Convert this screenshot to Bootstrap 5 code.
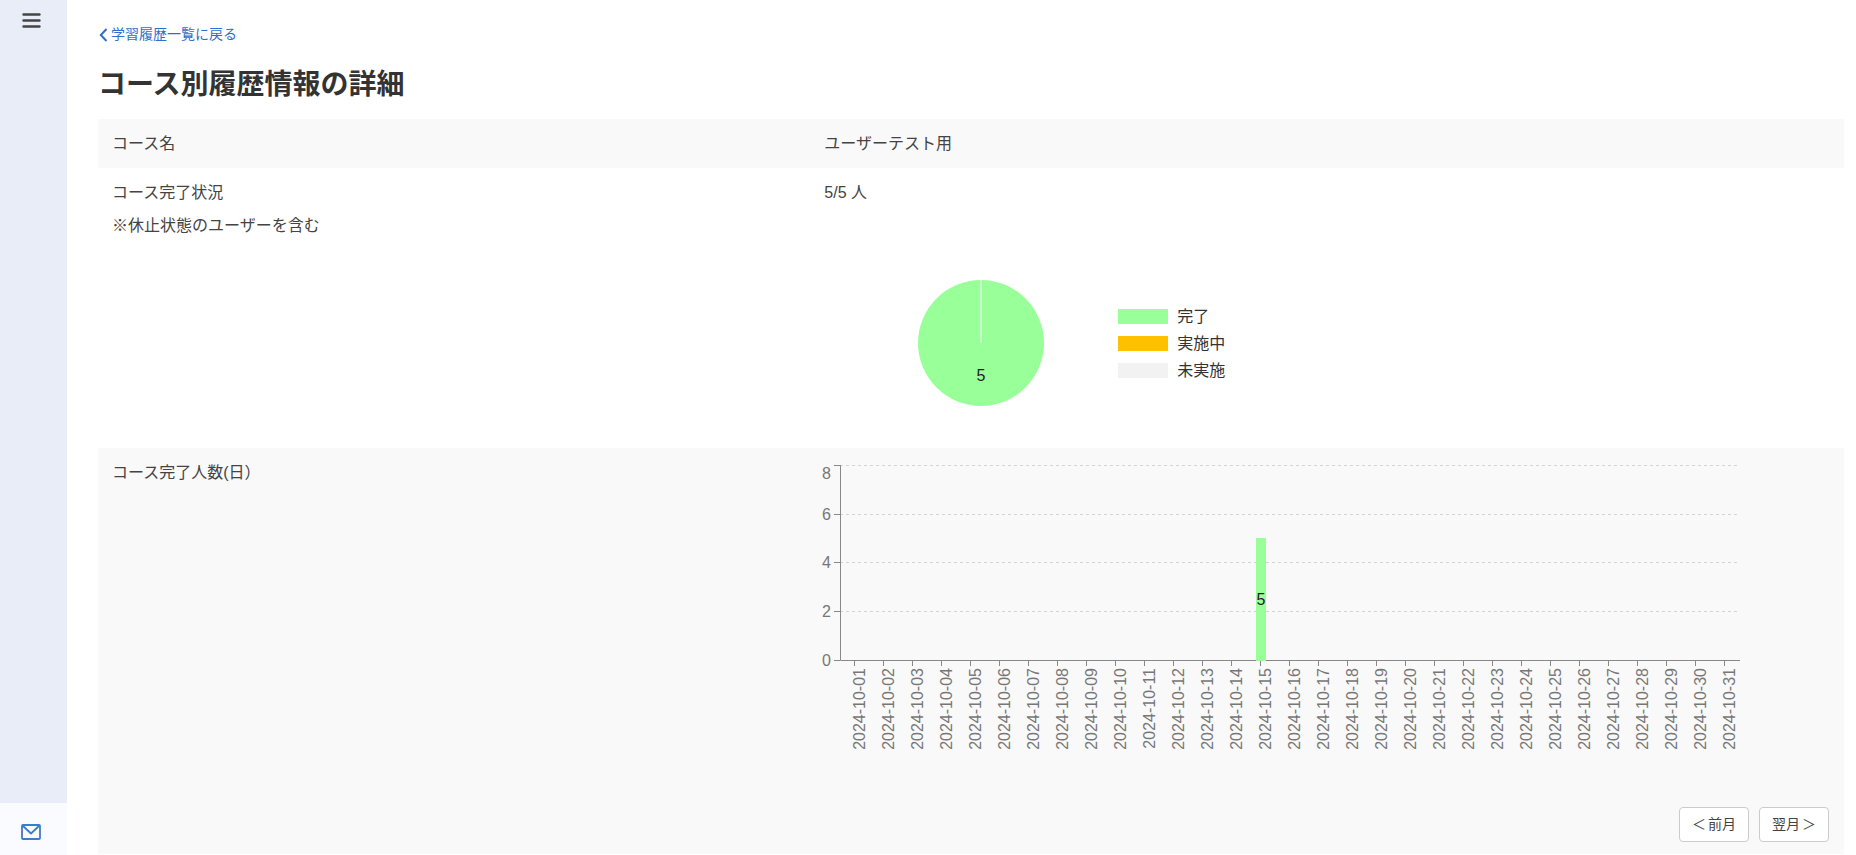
<!DOCTYPE html>
<html lang="ja">
<head>
<meta charset="utf-8">
<meta name="viewport" content="width=device-width, initial-scale=1">
<title>コース別履歴情報の詳細</title>
<link href="https://cdn.jsdelivr.net/npm/bootstrap@5.3.0/dist/css/bootstrap.min.css" rel="stylesheet">
<style>
body { font-family: "Liberation Sans", "Noto Sans CJK JP", sans-serif; font-size: 16px; line-height: 25px; color: #444; }
.side-rail { width: 67px; background: #e9edf7; }
.side-rail button { border: 0; background: transparent; padding: 0 0 0 22px; text-align: left; width: 100%; }
.side-rail .menu-toggle { height: 41px; }
.side-rail .mail-link { height: 52px; background: #f9fbfe; padding: 6px 0 0 21px; display: flex; align-items: center; }
.page-main { padding: 24px 12px 0 31px; min-width: 0; }
.back-link { font-size: 14px; line-height: 21px; color: #2e6fc9; gap: 3px; padding-left: 1px; }
.page-title { font-size: 28px; line-height: 36px; font-weight: 700; color: #333; margin: 22px 0 16px; }
.detail-table { --bs-table-color: #444; --bs-table-striped-color: #444; --bs-table-striped-bg: #f9f9f9; --bs-table-bg: #fff; }
.detail-table > tbody > tr > * { border: 0; padding: 12px 15px 12px 14px; font-weight: 400; vertical-align: top; }
.detail-table .col-label { width: 40.8%; }
.status-chart { gap: 74px; margin: 75px 0 30px 94px; }
.legend-item { gap: 9px; height: 27px; line-height: 27px; color: #333; }
.swatch { width: 50px; height: 15px; }
.done { background: #9f9; }
.doing { background: #ffc000; }
.todo { background: #f2f2f2; }
svg text { font-size: 16px; }
.daily-chart { overflow: visible; }
.daily-chart .tick-text { fill: #777; }
.month-nav { gap: 10px; }
.month-btn { display: flex; align-items: center; justify-content: center; gap: 2px; font-size: 14px; line-height: 21px; height: 35px; width: 70px; padding: 0; background: #fff; border: 1px solid #ccc; border-radius: 4px; color: #444; white-space: nowrap; }
</style>
</head>
<body>
<div class="d-flex min-vh-100">
  <nav class="side-rail d-flex flex-column justify-content-between flex-shrink-0" aria-label="メイン">
    <button type="button" class="menu-toggle" aria-label="メニュー">
      <svg class="d-block" width="19" height="15" viewBox="0 0 19 15" fill="none" stroke="#444" stroke-width="2.4" stroke-linecap="round"><path d="M1.5 1.5H17.5M1.5 7.5H17.5M1.5 13.5H17.5"/></svg>
    </button>
    <a href="#" class="mail-link" aria-label="メール">
      <svg width="20" height="16" viewBox="0 0 20 16" fill="none" stroke="#3f7bcb" stroke-width="1.8" stroke-linejoin="round"><rect x="1" y="1" width="18" height="14" rx="1"/><path d="M1.5 1.5L10 9.5L18.5 1.5"/></svg>
    </a>
  </nav>
  <main class="page-main flex-grow-1">
    <a href="#" class="back-link d-flex align-items-center text-decoration-none">
      <svg width="9" height="14" viewBox="0 0 9 14" fill="none" stroke="currentColor" stroke-width="2"><path d="M7.5 1L1.8 7L7.5 13"/></svg>
      <span>学習履歴一覧に戻る</span>
    </a>
    <h1 class="page-title">コース別履歴情報の詳細</h1>
    <table class="table table-striped detail-table mb-0">
      <tbody>
        <tr>
          <th scope="row" class="col-label">コース名</th>
          <td>ユーザーテスト用</td>
        </tr>
        <tr>
          <th scope="row">コース完了状況<div class="mt-2">※休止状態のユーザーを含む</div></th>
          <td>
            <div>5/5 人</div>
            <div class="status-chart d-flex align-items-center">
              <svg width="126" height="126" viewBox="0 0 126 126" role="img" aria-label="完了 5">
                <circle cx="63" cy="63" r="63" fill="#9f9"/>
                <path d="M63 0V63" stroke="#f2f2f2"/>
                <text x="63" y="101" text-anchor="middle" fill="#222">5</text>
              </svg>
              <ul class="list-unstyled mb-0">
                <li class="legend-item d-flex align-items-center"><span class="swatch done"></span>完了</li>
                <li class="legend-item d-flex align-items-center"><span class="swatch doing"></span>実施中</li>
                <li class="legend-item d-flex align-items-center"><span class="swatch todo"></span>未実施</li>
              </ul>
            </div>
          </td>
        </tr>
        <tr>
          <th scope="row">コース完了人数(日）</th>
          <td>
            <svg id="daily" class="daily-chart d-block" width="918" height="347" role="img" aria-label="コース完了人数"></svg>
            <div class="month-nav d-flex justify-content-end">
              <button type="button" class="month-btn"><span>＜</span><span>前月</span></button>
              <button type="button" class="month-btn"><span>翌月</span><span>＞</span></button>
            </div>
          </td>
        </tr>
      </tbody>
    </table>
  </main>
</div>
<script>
// Daily completions for the month: day number -> people
const completed = { 15: 5 };
const days = 31, maxValue = 8, left = 16, top0 = 5, base = 200, step = 29;
const y = v => base - Math.round(v * (base - top0) / maxValue);
let out = '';
for (let v = 0; v <= maxValue; v += 2) {
  if (v) out += `<path d="M${left} ${y(v)}.5H${left + days * step}" stroke="#d4d4d4" stroke-dasharray="3 3"/>`;
  out += `<path d="M${left - 6} ${y(v)}.5H${left}" stroke="#888"/>`;
  out += `<text class="tick-text" x="7" y="${Math.max(y(v) + 6, 19)}" text-anchor="end">${v}</text>`;
}
out += `<path d="M${left}.5 ${top0}V${base}.5H${left + days * step + 1}" fill="none" stroke="#888"/>`;
for (let d = 1; d <= days; d++) {
  const x = left + (d - 1) * step + 14;
  out += `<path d="M${x}.5 ${base}v6" stroke="#888"/>`;
  out += `<text class="tick-text" transform="translate(${x + 11} 208) rotate(-90)" text-anchor="end">2024-10-${String(d).padStart(2, '0')}</text>`;
  if (completed[d]) {
    const n = completed[d];
    out += `<rect x="${x - 4}" y="${y(n)}" width="10" height="${base - y(n) + 1}" fill="#9f9"/>`;
    out += `<text x="${x + 1}" y="${y(n / 2) + 6}" text-anchor="middle" fill="#222">${n}</text>`;
  }
}
document.getElementById('daily').innerHTML = out;
</script>
<script src="https://cdn.jsdelivr.net/npm/bootstrap@5.3.0/dist/js/bootstrap.bundle.min.js"></script>
</body>
</html>
